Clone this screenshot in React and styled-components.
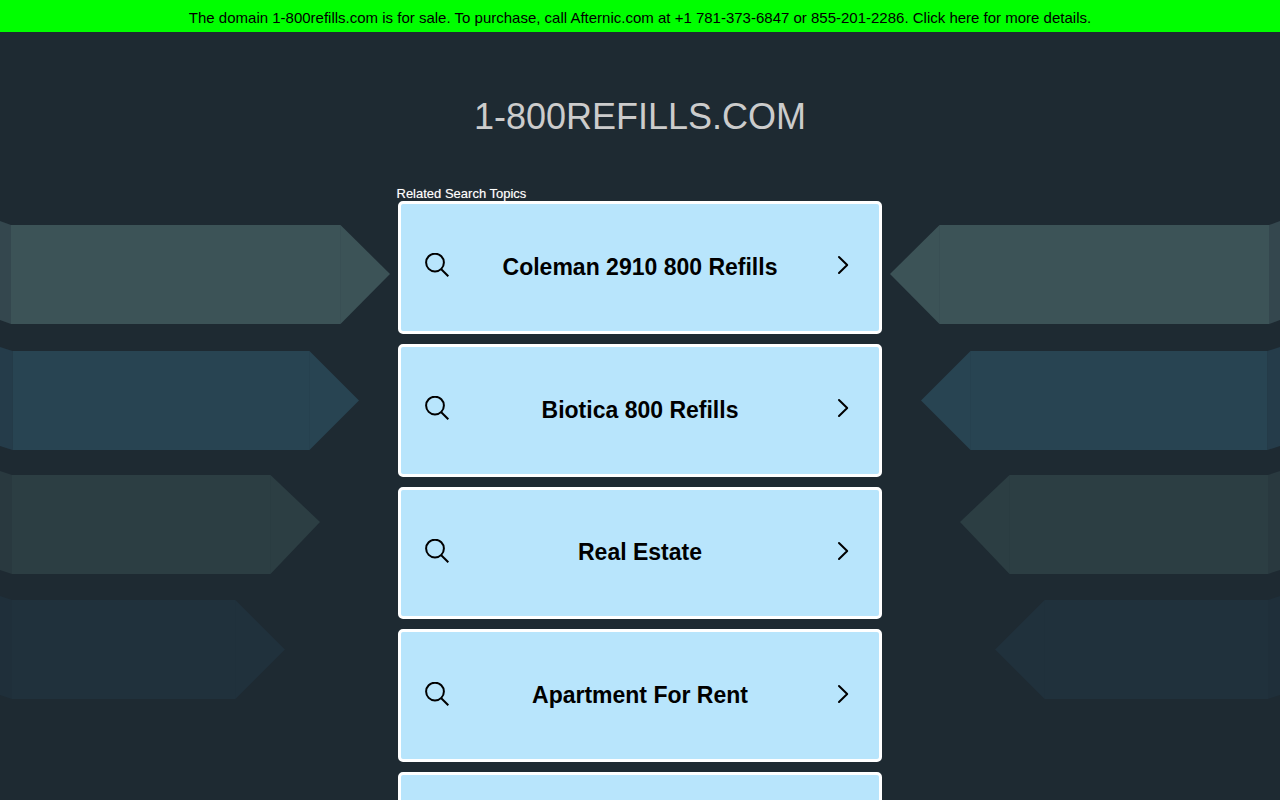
import React from "react";

import styled, { createGlobalStyle } from "styled-components";

const GlobalStyle = createGlobalStyle`
  * {
    box-sizing: border-box;
  }
  body {
    margin: 0;
    background-color: #1e2a32;
    font-family: "Liberation Sans", Arial, sans-serif;
    overflow: hidden;
  }
`;

const Page = styled.div`
  position: relative;
  height: 800px;
  overflow: hidden;
`;

const Backdrop = styled.svg`
  position: absolute;
  top: 0;
  left: 0;
  width: 1280px;
  height: 800px;
`;

const Banner = styled.a`
  position: relative;
  display: flex;
  justify-content: center;
  align-items: center;
  height: 32px;
  padding-top: 3px;
  background-color: #00ff00;
  color: #000;
  font-size: 15px;
  text-decoration: none;
  white-space: nowrap;
`;

const Title = styled.h1`
  position: relative;
  margin: 64px 0 0;
  color: #ccc;
  font-size: 36px;
  font-weight: 400;
  line-height: 42px;
  text-align: center;
`;

const Topics = styled.main`
  position: relative;
  width: 484px;
  margin: 47px auto 0;
`;

const TopicsLabel = styled.div`
  height: 16.3px;
  margin-left: -1.5px;
  color: #fff;
  font-size: 13px;
  line-height: 18px;
  text-shadow: 0 0 1px #848484;
`;

const TopicList = styled.div`
  display: flex;
  flex-direction: column;
  gap: 10px;
`;

const Topic = styled.a`
  display: flex;
  align-items: center;
  flex-shrink: 0;
  height: 132.7px;
  padding: 0 24px;
  border: 3px solid #fff;
  border-radius: 5px;
  background-color: #b8e5fc;
  color: #000;
  text-decoration: none;
`;

const TopicName = styled.span`
  flex: 1;
  margin-bottom: 0.6px;
  font-size: 23px;
  font-weight: 700;
  line-height: 27px;
  text-align: center;
`;

const Icon = styled.svg`
  width: 24px;
  height: 24px;
  margin-bottom: 4.4px;
  fill: none;
  stroke: #000;
  stroke-width: 2;
`;

const topics = [
  "Coleman 2910 800 Refills",
  "Biotica 800 Refills",
  "Real Estate",
  "Apartment For Rent",
  "",
];

const arrows = [
  { top: 225, bottom: 324, mid: 274, fold: 11, neck: 340.5, tip: 390, fill: "#3c5357", side: "#34474e" },
  { top: 351, bottom: 450, mid: 400.5, fold: 12.5, neck: 309.5, tip: 359, fill: "#284452", side: "#253c4a" },
  { top: 475, bottom: 574, mid: 522, fold: 12, neck: 270.5, tip: 320, fill: "#2c3e43", side: "#29393f" },
  { top: 600, bottom: 699, mid: 649.5, fold: 12, neck: 235.5, tip: 285, fill: "#20313c", side: "#1f2f3a" },
];

function Arrow({ top, bottom, mid, fold, neck, tip, fill, side }) {
  return (
    <>
      <polygon points={`0,${top - 4} ${fold},${top} ${fold},${bottom} 0,${bottom - 4}`} fill={side} />
      <polygon points={`${fold},${top} ${neck},${top} ${tip},${mid} ${neck},${bottom} ${fold},${bottom}`} fill={fill} />
      <path d={`M${neck} ${top}V${bottom}`} stroke="#1e2a32" strokeOpacity="0.08" />
    </>
  );
}

function Arrows() {
  return (
    <Backdrop viewBox="0 0 1280 800">
      <g>
        {arrows.map((arrow) => (
          <Arrow key={arrow.top} {...arrow} />
        ))}
      </g>
      <g transform="translate(1280 0) scale(-1 1)">
        {arrows.map((arrow) => (
          <Arrow key={arrow.top} {...arrow} />
        ))}
      </g>
    </Backdrop>
  );
}

function App() {
  return (
    <>
      <GlobalStyle />
      <Page>
        <Arrows />
        <Banner href="#">
          The domain 1-800refills.com is for sale. To purchase, call Afternic.com at +1 781-373-6847 or 855-201-2286. Click here for more details.
        </Banner>
        <Title>1-800REFILLS.COM</Title>
        <Topics>
          <TopicsLabel>Related Search Topics</TopicsLabel>
          <TopicList>
            {topics.map((name) => (
              <Topic key={name} href="#">
                <Icon viewBox="0 0 24 24">
                  <circle cx="10" cy="9.6" r="8.9" />
                  <path d="M16 16L23.3 23.3" />
                </Icon>
                <TopicName>{name}</TopicName>
                <Icon viewBox="0 0 24 24">
                  <path d="M8 4L16.2 12L8 20" strokeLinecap="round" strokeLinejoin="round" />
                </Icon>
              </Topic>
            ))}
          </TopicList>
        </Topics>
      </Page>
    </>
  );
}

export default App;
